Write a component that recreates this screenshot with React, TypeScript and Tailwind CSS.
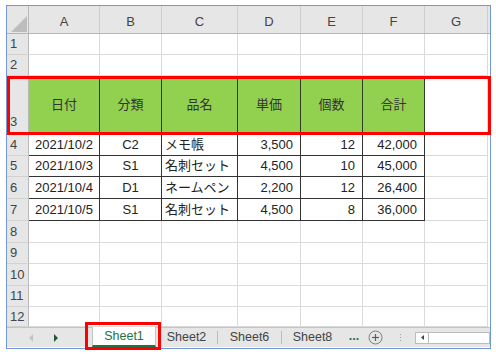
import React from "react";

const colW = ["w-[71px]", "w-[62px]", "w-[76px]", "w-[63px]", "w-[62px]", "w-[62px]", "w-[63px]"];
const rowH = ["h-[21px]", "h-[21px]", "h-[59px]", "h-[21px]", "h-[21px]", "h-[22px]", "h-[22px]", "h-[22px]", "h-[21px]", "h-[22px]", "h-[21px]", "h-[20px]"];
const letters = ["A", "B", "C", "D", "E", "F", "G"];
const heads = ["日付", "分類", "品名", "単価", "個数", "合計"];
const data: string[][] = [
  ["2021/10/2", "C2", "メモ帳", "3,500", "12", "42,000"],
  ["2021/10/3", "S1", "名刺セット", "4,500", "10", "45,000"],
  ["2021/10/4", "D1", "ネームペン", "2,200", "12", "26,400"],
  ["2021/10/5", "S1", "名刺セット", "4,500", "8", "36,000"],
];
const align = ["justify-center", "justify-center", "justify-start pl-[3px]", "justify-end pr-[7px]", "justify-end pr-[7px]", "justify-end pr-[7px]"];

function Row({ idx }: { idx: number }) {
  const n = idx + 1;
  const isHead = n === 3;
  const dataRow = n >= 4 && n <= 7 ? data[n - 4] : null;
  return (
    <div className={`flex ${rowH[idx]}`}>
      <div
        className={`w-[22px] shrink-0 bg-[#e6e6e6] border-r border-b border-r-[#b9b9b9] border-b-[#d2d2d2] flex pl-[3px] text-[#444] text-[13px] ${
          isHead ? "items-end pb-[3px]" : "items-center"
        }`}
      >
        {n}
      </div>
      {colW.map((w, c) => {
        let cls = "border-r border-b border-[#dadada] bg-white";
        let content: React.ReactNode = null;
        if (c < 6 && isHead) {
          cls = "bg-[#92d050] border-r border-b border-[#2f3d22] justify-center text-[#333]";
          content = heads[c];
        } else if (c < 6 && dataRow) {
          cls = `bg-white border-r border-b border-[#333] ${align[c]}`;
          content = dataRow[c];
        }
        if (c === 6 && (isHead || dataRow)) {
          cls = "bg-white border-r border-b border-[#dadada] border-l-0";
        }
        return (
          <div key={c} className={`${w} shrink-0 flex items-center text-[13px] text-[#222] ${cls}`}>
            {content}
          </div>
        );
      })}
      <div className="flex-1 bg-white" />
    </div>
  );
}

export default function App() {
  return (
    <div className="relative w-[496px] h-[356px] bg-white font-['Liberation_Sans','Noto_Sans_CJK_JP',sans-serif] overflow-hidden">
      <div className="ml-[6px] mt-[5px] w-[485px] h-[344px] border border-[#7098d6] flex flex-col overflow-hidden">
        {/* column header */}
        <div className="flex h-[28px] bg-[#e6e6e6] border-b border-[#b5b5b5]">
          <div className="w-[22px] shrink-0 border-r border-[#b9b9b9] flex items-end justify-end pr-[1px] pb-[1px]">
            <svg width="16" height="16" viewBox="0 0 16 16">
              <polygon points="16,0 16,16 0,16" fill="#bdbdbd" />
            </svg>
          </div>
          {colW.map((w, c) => (
            <div key={c} className={`${w} shrink-0 flex items-center justify-center pt-[5px] text-[13px] text-[#444] border-r border-[#cfcfcf]`}>
              {letters[c]}
            </div>
          ))}
          <div className="flex-1" />
        </div>
        {rowH.map((_, i) => (
          <Row key={i} idx={i} />
        ))}
        {/* tab bar */}
        <div className="flex h-[20px] bg-[#e6e6e6] border-t border-[#c4c4c4] items-stretch text-[12.5px] text-[#444]">
          <div className="w-[85px] shrink-0 flex items-center pl-[22px]">
            <svg width="5" height="8" viewBox="0 0 5 8">
              <polygon points="4,0 4,8 0,4" fill="#c4c4c4" />
            </svg>
            <svg width="5" height="8" viewBox="0 0 5 8" className="ml-[19px]">
              <polygon points="1,0 1,8 5,4" fill="#1e5a32" />
            </svg>
          </div>
          <div className="w-[64px] shrink-0 -mt-px bg-white border-r border-l border-[#c4c4c4] border-b-2 border-b-[#217346] flex items-center justify-center text-[#217346]">
            Sheet1
          </div>
          <div className="w-[61px] shrink-0 flex items-center justify-center">Sheet2</div>
          <div className="w-px shrink-0 my-[3px] bg-[#bdbdbd]" />
          <div className="w-[63px] shrink-0 flex items-center justify-center">Sheet6</div>
          <div className="w-px shrink-0 my-[3px] bg-[#bdbdbd]" />
          <div className="w-[61px] shrink-0 flex items-center justify-center">Sheet8</div>
          <div className="w-[22px] shrink-0 flex items-center justify-center text-[#217346] font-bold pb-[2px]">...</div>
          <div className="w-[20px] shrink-0 flex items-center justify-center">
            <svg width="15" height="15" viewBox="0 0 15 15">
              <circle cx="7.5" cy="7.5" r="6.5" fill="none" stroke="#808080" strokeWidth="1" />
              <line x1="4" y1="7.5" x2="11" y2="7.5" stroke="#606060" strokeWidth="1.2" />
              <line x1="7.5" y1="4" x2="7.5" y2="11" stroke="#606060" strokeWidth="1.2" />
            </svg>
          </div>
          <div className="w-[30px] shrink-0 flex flex-col items-center justify-center gap-[2px]">
            <div className="w-px h-px bg-[#a0a0a0]" />
            <div className="w-px h-px bg-[#a0a0a0]" />
            <div className="w-px h-px bg-[#a0a0a0]" />
          </div>
          <div className="flex-1 flex items-center">
            <div className="flex-1 h-[12px] bg-white border border-[#bcbcbc] flex">
              <div className="w-[13px] border-r border-[#bcbcbc] flex items-center justify-center">
                <svg width="3" height="5" viewBox="0 0 3 5">
                  <polygon points="3,0 3,5 0,2.5" fill="#444" />
                </svg>
              </div>
            </div>
          </div>
        </div>
      </div>
      {/* red highlight boxes */}
      <div className="absolute left-[7px] top-[76px] w-[484px] h-[59px] border-[3px] border-[#ff0000]" />
      <div className="absolute left-[85px] top-[322px] w-[76px] h-[28px] border-[3px] border-[#ff0000]" />
    </div>
  );
}
